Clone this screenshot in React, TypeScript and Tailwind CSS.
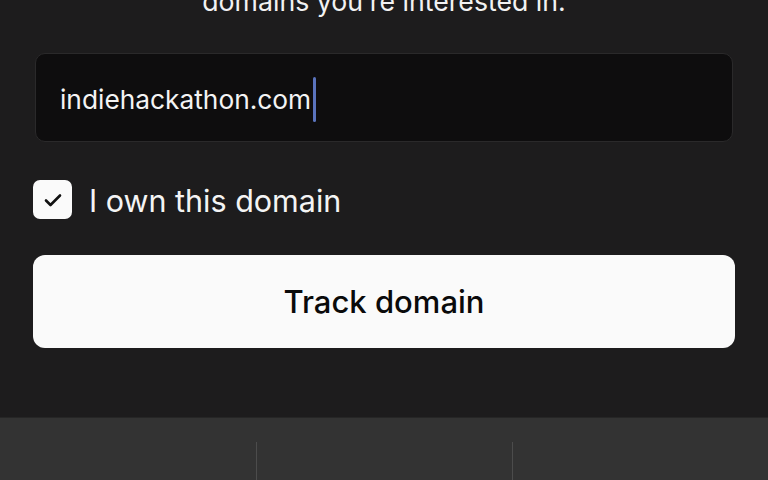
import { useState } from "react";

export default function App() {
    const [domain] = useState("indiehackathon.com");
    const [owned, setOwned] = useState(true);

    return (
        <div className="w-[768px] h-[480px] overflow-hidden flex flex-col bg-[#1d1c1d] font-['Inter',sans-serif]">
            <div className="flex-1 flex flex-col px-[33px]">
                <p className="-mt-[15px] h-[32px] leading-[32px] text-center text-[26.7px] text-[#f2f2f2]">
                    domains you’re interested in.
                </p>

                <div className="mt-[36px] mx-[2px] h-[89px] rounded-[10px] border border-[#2a292a] bg-[#0e0d0e] flex items-center pl-[24px]">
                    <span className="pt-[5px] text-[26.3px] text-[#f4f4f4] leading-none">{domain}</span>
                    <span className="ml-[2px] mt-[3px] w-[3px] h-[45px] rounded-full bg-[#5a73bd]"></span>
                </div>

                <label className="mt-[38px] flex items-center gap-[17px] cursor-pointer">
                    <button
                        type="button"
                        onClick={() => setOwned(!owned)}
                        className="w-[39px] h-[39px] rounded-[7px] bg-[#fafafa] flex items-center justify-center"
                    >
                        {owned && (
                            <svg width="24" height="24" viewBox="0 0 24 24" fill="none" stroke="#111" strokeWidth="2.6" strokeLinecap="round" strokeLinejoin="round">
                                <path d="M5 12.5l4.5 4.5L19 7.5" />
                            </svg>
                        )}
                    </button>
                    <span className="pt-[3px] text-[30.5px] text-[#f4f4f4] leading-none">I own this domain</span>
                </label>

                <button type="button" className="mt-[36px] pt-[2px] h-[93px] w-full rounded-[12px] bg-[#fafafa] text-[31px] font-medium text-[#0a0a0a]">
                    Track domain
                </button>
            </div>

            <div className="h-[63px] bg-[#333333] border-t border-[#262626] grid grid-cols-3">
                <div className="flex items-end"></div>
                <div className="flex items-end">
                    <div className="w-px h-[38px] bg-[#4c4c4c]"></div>
                </div>
                <div className="flex items-end">
                    <div className="w-px h-[38px] bg-[#4c4c4c]"></div>
                </div>
            </div>
        </div>
    );
}
